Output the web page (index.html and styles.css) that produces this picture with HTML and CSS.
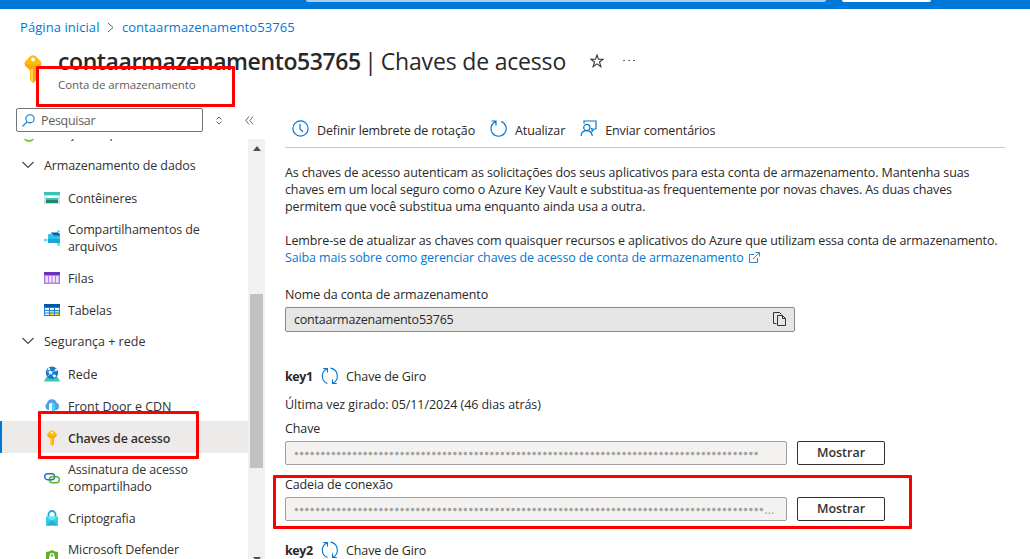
FILE: index.html
```html
<!DOCTYPE html>
<html lang="pt-BR">
<head>
<meta charset="utf-8">
<title>contaarmazenamento53765 | Chaves de acesso</title>
<link rel="stylesheet" href="styles.css">
</head>
<body>
<svg class="defs" width="0" height="0">
  <defs>
    <symbol id="key" viewBox="0 0 18 28">
      <path d="M6 1.500Q9-1 12 1.500L16.500 6Q18.500 8.500 16.500 11L12 15V25L9 28L6 25V15L1.500 11Q-.5 8.500 1.500 6Z" fill="#ffbd0a"/>
      <path d="M1 8.500Q9 11 17 8.500Q17 11 12 15V25L9 28V15L6 15L1.500 11Z" fill="#faa80c"/>
      <path d="M7 14H9V27L7 25Z" fill="#ffd35b"/><circle cx="9" cy="4.500" r="1.900" fill="#fff"/>
    </symbol>
    <symbol id="chevron" viewBox="0 0 12 8"><path d="M.5 1L6 6.500L11.500 1" fill="none" stroke="#444" stroke-width="1.100"/></symbol>
    <symbol id="rotate" viewBox="0 0 18 18"><path d="M6.500 5.500V1.500H2.200M6.200 1.800A8 8 0 0 0 6.500 16.600M9.500 1.100A8 8 0 0 1 11.800 16.200M11.500 12.500V16.500H15.800" fill="none" stroke="#0078d4" stroke-width="1.100"/></symbol>
  </defs>
</svg>
<div class="page">
  <div class="topbar"><div class="search-edge"></div><div class="button-edge"></div></div>
  <nav class="crumbs"><a class="c-home">Página inicial</a><svg width="7" height="11" viewBox="0 0 7 11"><path d="M1 1L6 5.500L1 10" fill="none" stroke="#666"/></svg><a class="c-account">contaarmazenamento53765</a></nav>
  <header class="header">
    <svg class="header-key" width="18" height="28"><use href="#key"/></svg>
    <div class="titles">
      <div class="title-row">
        <h1><b>contaarmazenamento53765</b><span class="title-sep">|</span><span class="title-page">Chaves de acesso</span></h1>
        <svg class="star" width="14" height="14" viewBox="0 0 14 14"><path d="M7 1L8.500 5.200H13.200L9.500 8L10.900 12.700L7 9.900L3.100 12.700L4.500 8L.8 5.200H5.500Z" fill="none" stroke="#333" stroke-width="1.100"/></svg>
        <svg class="dots" width="12" height="2" viewBox="0 0 12 2"><path d="M0 .5H2M5 .5H7M10 .5H12" stroke="#666"/></svg>
      </div>
      <div class="subtitle">Conta de armazenamento</div>
    </div>
  </header>
  <div class="body">
    <aside class="sidebar">
      <div class="filter-row">
        <div class="filter"><svg width="13" height="13" viewBox="0 0 13 13"><circle cx="8" cy="4.800" r="4.100" fill="none" stroke="#0078d4" stroke-width="1.100"/><path d="M5 7.800L.5 12.300" stroke="#0078d4" stroke-width="1.200"/></svg><span>Pesquisar</span></div>
        <svg class="sort" width="8" height="9" viewBox="0 0 8 9"><path d="M1.500 3.500L4 1L6.500 3.500M1.500 5.500L4 8L6.500 5.500" fill="none" stroke="#666"/></svg>
        <svg class="collapse" width="9" height="9" viewBox="0 0 9 9"><path d="M4 .5L.8 4.500L4 8.500M8 .5L4.800 4.500L8 8.500" fill="none" stroke="#666"/></svg>
      </div>
      <div class="menu">
        <div class="items">
          <div class="clipped"><svg width="12" height="12" viewBox="0 0 12 12"><circle cx="6" cy="6" r="5" fill="none" stroke="#7bc02c" stroke-width="1.800"/></svg><span>Solução de problemas</span></div>
          <div class="group"><svg width="12" height="8"><use href="#chevron"/></svg><span>Armazenamento de dados</span></div>
          <div class="item"><svg width="16" height="16" viewBox="0 0 16 16"><path d="M0 2H16V14H0Z" fill="#d9dadb"/><path d="M0 2H16V5H0Z" fill="#37c2b1"/><path d="M2 6H14V8H2Z" fill="#fff"/><path d="M2 8H14V10H2Z" fill="#37c2b1"/><path d="M2 10H14V13H2Z" fill="#258277"/></svg><span>Contêineres</span></div>
          <div class="item tall"><svg width="16" height="16" viewBox="0 0 16 16"><path d="M0 10H6M12 4L15 1M12 12L15 14" stroke="#50e0f5" stroke-width="1.200"/><circle cx="1.500" cy="10" r="1.500" fill="#50e0f5"/><circle cx="14.500" cy="1.500" r="1.300" fill="#50e0f5"/><circle cx="14.500" cy="14.500" r="1.400" fill="#50e0f5"/><path d="M7 2.500H13L16 4V12H12Z" fill="#1755a4"/><path d="M5 4H9L10 5.500H16V13H5Q4 13 4 12V5Q4 4 5 4Z" fill="#30c2ea"/><path d="M4 9H16V13H5Q4 13 4 12Z" fill="#1fa3d3"/></svg><span>Compartilhamentos de<br>arquivos</span></div>
          <div class="item"><svg width="16" height="16" viewBox="0 0 16 16"><path d="M0 2H16V14H0Z" fill="#b07ff0"/><path d="M0 2H16V5H0Z" fill="#6c32bd"/><path d="M1.500 6H4V12.500H1.500ZM5 6H7.500V12.500H5ZM8.500 6H11V12.500H8.500ZM12 6H14.500V12.500H12Z" fill="#eee2ff"/></svg><span class="natural">Filas</span></div>
          <div class="item"><svg width="16" height="16" viewBox="0 0 16 16"><path d="M0 2H16V14H0Z" fill="#1685df"/><path d="M0 2H16V5H0Z" fill="#0058a5"/><path d="M1 6H5V8H1ZM1 9H5V10.500H1ZM1 11.500H5V13H1ZM6 6H10V8H6ZM11 6H15V8H11Z" fill="#f2f7fb"/><path d="M6 9H10V10.500H6ZM11 9H15V10.500H11ZM6 11.500H10V13H6ZM11 11.500H15V13H11Z" fill="#ffdc35"/></svg><span>Tabelas</span></div>
          <div class="group"><svg width="12" height="8"><use href="#chevron"/></svg><span class="natural">Segurança + rede</span></div>
          <div class="item"><svg width="16" height="16" viewBox="0 0 16 16"><path d="M2.500 11H13.500L16 15.500H0Z" fill="#39c7ae"/><circle cx="8" cy="6.800" r="6.200" fill="#1479d2"/><path d="M3 5L7 7L12 4M7 7L10 11M5 2L7 7L4 10" stroke="#8bcaf5" fill="none"/><circle cx="6.500" cy="6.500" r="1.700" fill="#fff"/><circle cx="5" cy="3" r="1.200" fill="#d7edfc"/><circle cx="12" cy="4" r="1.300" fill="#d7edfc"/><circle cx="10.500" cy="10" r="1.400" fill="#fff"/></svg><span class="natural">Rede</span></div>
          <div class="item"><svg width="16" height="16" viewBox="0 0 16 16"><path d="M4 12A4 4 0 0 1 3 5A5 5 0 0 1 12.500 4.500A4 4 0 0 1 12.500 12Z" fill="#559cec"/><path d="M5 6L8 4.500V15L5 13Z" fill="#fff"/><path d="M8 4.500L11 6V13L8 15Z" fill="#45d3ed"/></svg><span class="natural">Front Door e CDN</span></div>
          <div class="item active"><svg width="16" height="16"><use href="#key" width="16" height="16"/></svg><span>Chaves de acesso</span></div>
          <div class="item tall"><svg width="16" height="16" viewBox="0 0 16 16"><rect x=".7" y="3.700" width="10" height="6" rx="3" fill="none" stroke="#1c72ca" stroke-width="1.400"/><rect x="5.300" y="6.700" width="10" height="6" rx="3" fill="none" stroke="#59b323" stroke-width="1.400"/><path d="M7.500 9.700H5.500" stroke="#1c72ca" stroke-width="1.400"/></svg><span>Assinatura de acesso<br>compartilhado</span></div>
          <div class="item"><svg width="16" height="16" viewBox="0 0 16 16"><path d="M4.500 8V4.500A3.500 3.500 0 0 1 11.500 4.500V8" fill="none" stroke="#22a5cf" stroke-width="1.800"/><path d="M2 6.500H14V15.500H2Z" fill="#38cae9"/><path d="M2 6.500L8 11L14 6.500Z" fill="#70e3f5"/><path d="M2 15.500L8 10L14 15.500Z" fill="#20b2d6"/></svg><span>Criptografia</span></div>
          <div class="item tall"><svg width="16" height="16" viewBox="0 0 16 16"><path d="M2 2Q5 2 8 0Q11 2 14 2V8Q14 13 8 16Q2 13 2 8Z" fill="#63ad27"/><path d="M5 6.500H11V11.500H5Z" fill="#fff"/><path d="M6.200 7V5.500A1.800 1.800 0 0 1 9.800 5.500V7" fill="none" stroke="#fff" stroke-width="1.200"/></svg><span>Microsoft Defender</span></div>
        </div>
        <div class="scrollbar"><svg width="8" height="5"><path d="M0 5L4 0L8 5Z" fill="#505050"/></svg><div class="thumb"></div><svg class="down" width="8" height="5"><path d="M0 0H8L4 5Z" fill="#505050"/></svg></div>
      </div>
    </aside>
    <main class="content">
      <div class="toolbar">
        <svg width="17" height="17" viewBox="0 0 17 17"><circle cx="8.500" cy="8.500" r="7.600" fill="none" stroke="#0078d4" stroke-width="1.200"/><path d="M8 4V9L11 12" fill="none" stroke="#0078d4" stroke-width="1.200"/></svg><span class="b-def">Definir lembrete de rotação</span>
        <svg width="17" height="17" viewBox="0 0 17 17"><path d="M1.500 1H6V5.500M6 1.500A7.600 7.600 0 1 0 11.200 1.500" fill="none" stroke="#0078d4" stroke-width="1.200"/></svg><span class="b-atual">Atualizar</span>
        <svg width="17" height="17" viewBox="0 0 17 17"><path d="M4 3.500V1H16V9H14L12 11.500V8.500H11" fill="none" stroke="#0078d4" stroke-width="1.200"/><circle cx="6.800" cy="7.500" r="3.100" fill="none" stroke="#0078d4" stroke-width="1.200"/><path d="M1 16Q1.500 10.700 6.800 10.700Q11 10.700 12.500 16" fill="none" stroke="#0078d4" stroke-width="1.200"/></svg><span class="b-env">Enviar comentários</span>
      </div>
      <p class="intro">As chaves de acesso autenticam as solicitações dos seus aplicativos para esta conta de armazenamento. Mantenha suas<br>chaves em um local seguro como o Azure Key Vault e substitua-as frequentemente por novas chaves. As duas chaves<br>permitem que você substitua uma enquanto ainda usa a outra.</p>
      <p class="remind">Lembre-se de atualizar as chaves com quaisquer recursos e aplicativos do Azure que utilizam essa conta de armazenamento.<br><a><span>Saiba mais sobre como gerenciar chaves de acesso de conta de armazenamento</span><svg class="ext" width="11" height="11" viewBox="0 0 11 11"><path d="M5 2.500H.5V10.500H8.500V6M4 7L10 1M6.500 .5H10.500V4.500" fill="none" stroke="#2b85d8"/></svg></a></p>
      <label class="name-label">Nome da conta de armazenamento</label>
      <div class="name-box"><span class="account-name">contaarmazenamento53765</span><svg width="14" height="15" viewBox="0 0 14 15"><path d="M3.500 11.500H.5V.5H6.500L8.500 2.500M4.500 3.500H9.500L12.500 6.500V13.500H4.500ZM9.500 3.500V6.500H12.500" fill="none" stroke="#333"/></svg></div>
      <div class="key-row"><b>key1</b><svg width="18" height="18"><use href="#rotate"/></svg><span>Chave de Giro</span></div>
      <div class="rotated">Última vez girado: 05/11/2024 (46 dias atrás)</div>
      <label class="chave">Chave</label>
      <div class="secret-row"><div class="secret"><span>••••••••••••••••••••••••••••••••••••••••••••••••••••••••••••••••••••••••••••••••••••••••</span></div><button>Mostrar</button></div>
      <label class="cadeia">Cadeia de conexão</label>
      <div class="secret-row"><div class="secret"><span>•••••••••••••••••••••••••••••••••••••••••••••••••••••••••••••••••••••••••••••••••••••••••</span><em>...</em></div><button>Mostrar</button></div>
      <div class="key-row second"><b>key2</b><svg width="18" height="18"><use href="#rotate"/></svg><span>Chave de Giro</span></div>
    </main>
  </div>
  <div class="mark mark-type"></div>
  <div class="mark mark-menu"></div>
  <div class="mark mark-connection"></div>
</div>
</body>
</html>
```
FILE: styles.css
```css
* { box-sizing: border-box; }
body { margin: 0; font-family: "Open Sans", "Noto Sans", sans-serif; font-size: 12.5px; line-height: 17px; letter-spacing: -.12px; color: #292827; background: #fff; }
svg { display: block; flex: none; }
p, h1 { margin: 0; }
p, span, a, b { white-space: nowrap; }
.natural { letter-spacing: 0; }
.defs { position: absolute; }
.page { position: relative; width: 1030px; height: 559px; overflow: hidden; }
.topbar { height: 9px; background: #0078d7; display: flex; padding-left: 306px; gap: 16px; }
.search-edge { width: 520px; height: 2px; background: #a6d1f2; border-radius: 0 0 2px 2px; }
.button-edge { width: 89px; height: 2px; background: #fff; border-radius: 0 0 2px 2px; }
.crumbs { height: 37px; padding: 0 0 0 20px; display: flex; align-items: center; gap: 7.700px; color: #0078d4; font-size: 13px; letter-spacing: .07px; }
.header { height: 61px; display: flex; padding-left: 24px; gap: 16px; }
.header-key { margin-top: 9px; }
.title-row { display: flex; align-items: center; height: 30px; }
h1 { display: flex; font-size: 23px; font-weight: 400; line-height: 30px; letter-spacing: -.4px; }
h1 b { font-weight: 600; }
.title-sep { width: 20px; padding-right: 1px; text-align: center; }
.title-page { letter-spacing: -.18px; }
.star { margin-left: 24px; }
.dots { margin-left: 19px; }
.subtitle { font-size: 11.500px; color: #605e5c; line-height: 17px; letter-spacing: -.1px; }
.body { display: flex; height: 452px; }
.sidebar { width: 265px; flex: none; }
.filter-row { height: 32px; display: flex; align-items: center; padding: 1px 0 7px 16px; }
.filter { width: 187px; height: 24px; border: 1px solid #767573; border-radius: 2px; padding-left: 5px; display: flex; align-items: center; gap: 6px; color: #605e5c; letter-spacing: -.3px; }
.sort { margin-left: 12px; }
.collapse { margin-left: 22px; }
.menu { display: flex; height: 420px; overflow: hidden; }
.items { width: 248px; color: #323130; }
.clipped { height: 10px; overflow: hidden; display: flex; align-items: flex-end; padding: 0 0 7px 23px; gap: 9px; }
.group { height: 32px; display: flex; align-items: center; padding-left: 22px; gap: 10px; }
.item { height: 32px; display: flex; align-items: center; padding: 2px 0 0 44px; gap: 8px; }
.item.tall { height: 48px; }
.item.tall:last-child span { padding-bottom: 17px; }
.item.active { background: #edebe9; border-left: 2px solid #0078d4; padding-left: 42px; font-weight: 600; letter-spacing: -.18px; }
.scrollbar { width: 17px; background: #f1f1f1; display: flex; flex-direction: column; align-items: center; padding-top: 7px; }
.thumb { width: 13px; height: 174px; flex: none; margin-top: 143px; background: #c1c1c1; }
.down { margin-top: 89px; }
.content { padding: 12px 25px 0 20px; width: 765px; }
.toolbar { height: 29px; width: 720px; border-bottom: 1px solid #c8c6c4; display: flex; align-items: flex-start; gap: 8px; padding: 1px 0 0 7px; }
.toolbar svg + span { margin-right: 7px; padding-top: 2px; }
.intro { margin-top: 16px; }
.remind { margin-top: 17px; }
.remind a { color: #0078d4; display: flex; align-items: center; gap: 5px; }
label { display: block; height: 17px; }
.name-label { margin-top: 20px; }
.name-box { width: 510px; height: 25px; margin-top: 4px; border: 1px solid #8a8886; border-radius: 2px; background: #e6e6e6; padding: 0 7px 0 8px; display: flex; align-items: center; justify-content: space-between; }
.account-name { letter-spacing: -.22px; }
.key-row { margin-top: 34px; height: 20px; display: flex; align-items: center; gap: 7px; }
.key-row b { width: 29px; letter-spacing: -.4px; }
.rotated { margin-top: 10px; letter-spacing: -.06px; }
.chave { margin-top: 7px; }
.secret-row { display: flex; gap: 10px; margin-top: 4px; }
.secret { width: 502px; height: 24px; border: 1px solid #a19f9d; border-radius: 2px; background: #f3f2f1; color: #a19f9d; padding-left: 8px; display: flex; align-items: center; }
.secret span { letter-spacing: .585px; -webkit-text-stroke: .6px #a19f9d; }
.secret em { font-style: normal; letter-spacing: 0; }
button { width: 88px; height: 24px; padding: 0 0 1px; border: 1px solid #323130; border-radius: 2px; background: #fff; color: #323130; font: 600 12.5px/17px "Open Sans", sans-serif; }
.cadeia { margin-top: 11px; }
.key-row.second { margin-top: 19px; }
.mark { position: absolute; border: 3px solid #f00; border-radius: 1px; }
.mark-type { left: 36px; top: 66px; width: 199px; height: 41px; }
.mark-menu { left: 38px; top: 411px; width: 161px; height: 48px; }
.mark-connection { left: 273px; top: 475px; width: 639px; height: 54px; }
```
